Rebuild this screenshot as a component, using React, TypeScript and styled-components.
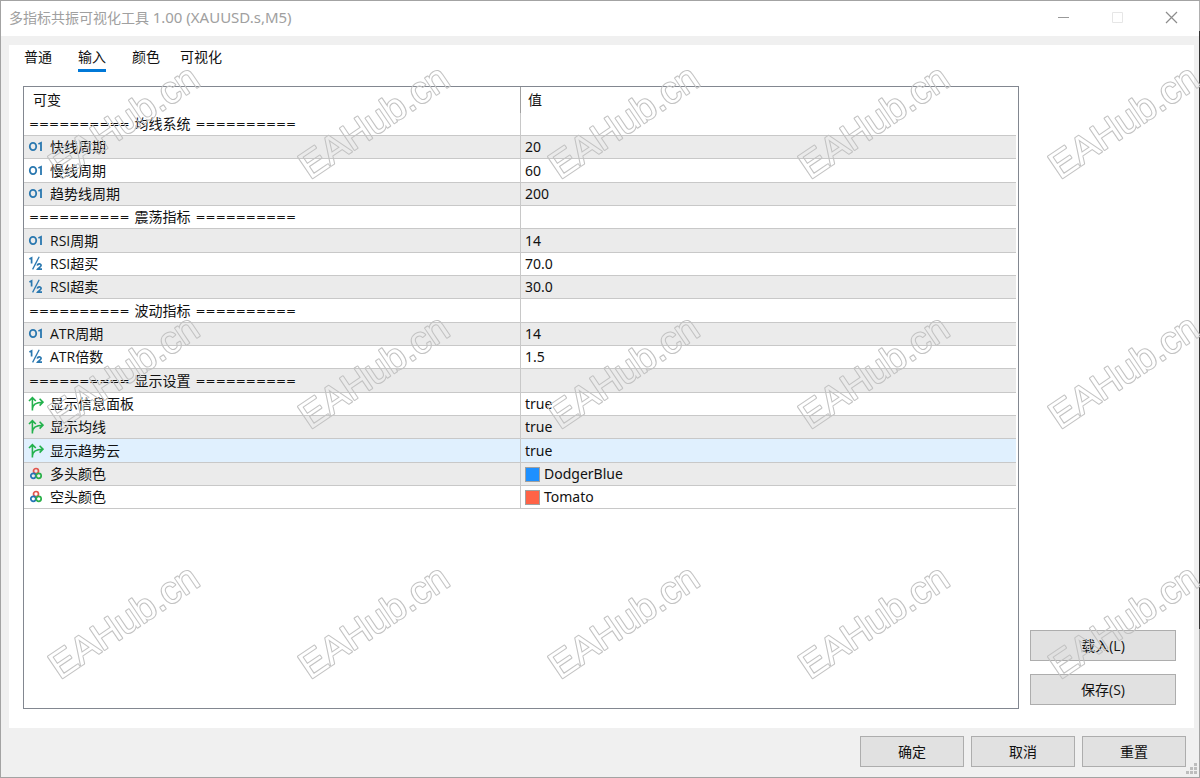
import React from 'react';
import styled, { createGlobalStyle } from 'styled-components';

const Global = createGlobalStyle`
  * { box-sizing: border-box; }
  body {
    margin: 0;
    font-family: 'Open Sans', 'Noto Sans CJK SC', sans-serif;
    font-size: 14px;
    line-height: 20px;
    color: #111;
  }
  button { font: inherit; color: inherit; }
`;

const Window = styled.div`
  position: relative;
  display: flex;
  flex-direction: column;
  min-height: 100vh;
  padding-right: 1px;
  border: 1px solid #a3a3a3;
  border-right: 0;
  background: linear-gradient(#b0b0b0 30px, #333 30px, #333 628px, #a3a3a3 628px);
`;

const TitleBar = styled.header`
  display: flex;
  align-items: center;
  justify-content: space-between;
  height: 35px;
  padding: 0 14px 2px 8px;
  background: #fff;
  color: #a0a0a0;
`;

const Title = styled.h1`
  margin: 0;
  font-family: 'Noto Sans', 'Noto Sans CJK SC', sans-serif;
  font-size: 14px;
  font-weight: 400;
`;

const Version = styled.span`
  font-size: 15px;
`;

const Controls = styled.div`
  display: flex;
  gap: 26px;
`;

const Control = styled.button`
  display: flex;
  align-items: center;
  justify-content: center;
  width: 28px;
  height: 24px;
  padding: 0;
  border: 0;
  background: none;
`;

const Body = styled.div`
  display: flex;
  flex: 1;
  flex-direction: column;
  padding: 9px 5px 0 8px;
  background: #f0f0f0;
`;

const Panel = styled.main`
  display: flex;
  flex: 1;
  flex-direction: column;
  padding: 2px 18px 19px 14px;
  background: #fff;
`;

const Tabs = styled.nav`
  display: flex;
  margin: 0 0 14px -12px;
`;

const Tab = styled.button`
  display: flex;
  justify-content: center;
  min-width: 54px;
  padding: 0 7px;
  border: 0;
  background: none;
`;

const TabLabel = styled.span<{ $active?: boolean }>`
  height: 25px;
  line-height: 20px;
  border-bottom: 3px solid ${(p) => (p.$active ? '#0078d7' : 'transparent')};
`;

const Content = styled.div`
  display: flex;
  flex: 1;
  gap: 11px;
`;

const List = styled.div`
  flex: 1;
  padding-right: 2px;
  border: 1px solid #828790;
  background: #fff;
`;

const Table = styled.table`
  width: 100%;
  table-layout: fixed;
  border-collapse: separate;
  border-spacing: 0;
`;

const Head = styled.th`
  height: 26px;
  padding: 0 9px;
  font-weight: 400;
  text-align: left;
  & + & {
    padding-left: 7px;
    border-left: 1px solid #a0a0a0;
  }
`;

const Row = styled.tr<{ $selected?: boolean }>`
  height: 23px;
  background: ${(p) => (p.$selected ? '#e0f0fe' : '#fff')};
  &:nth-child(even) {
    background: ${(p) => (p.$selected ? '#e0f0fe' : '#ebebeb')};
  }
  &:nth-child(3n) { height: 24px; }
`;

const Cell = styled.td`
  padding: 0 4px;
  border-bottom: 1px solid #c8c8c8;
  & + & { border-left: 1px solid #c8c8c8; }
`;

const Line = styled.div`
  display: flex;
  align-items: center;
  height: 20px;
  gap: 4px;
`;

const NameLine = styled(Line)`
  gap: 6px;
`;

const Value = styled(Line)`
  font-family: 'Noto Sans', sans-serif;
`;

const Rule = styled.span`
  font-family: 'DejaVu Sans', sans-serif;
  font-size: 12px;
`;

const Section = styled(Line)`
  gap: 5px;
  padding-left: 1px;
`;

const Swatch = styled.span<{ $color: string }>`
  width: 15px;
  height: 15px;
  border: 1px solid #a0a0a0;
  background: ${(p) => p.$color};
`;

const Side = styled.aside`
  display: flex;
  flex-direction: column;
  justify-content: flex-end;
  gap: 13px;
  width: 146px;
  padding-bottom: 4px;
`;

const PushButton = styled.button`
  height: 31px;
  padding: 0;
  border: 1px solid #adadad;
  background: #e1e1e1;
`;

const Footer = styled.footer`
  display: flex;
  justify-content: flex-end;
  gap: 7px;
  padding: 8px 8px 10px 0;
  ${PushButton} { width: 104px; }
`;

const Grip = styled.svg`
  position: absolute;
  right: 2px;
  bottom: 2px;
`;

const Watermarks = styled.div`
  position: absolute;
  inset: -1px 0 0 -1px;
  display: grid;
  grid-template-columns: repeat(5, 250px);
  grid-auto-rows: 250px;
  overflow: hidden;
  pointer-events: none;
`;

const Mark = styled.svg`
  overflow: visible;
  font-family: 'Liberation Sans', sans-serif;
  font-size: 38px;
`;

type Kind = 'int' | 'double' | 'bool' | 'color';

function TypeIcon({ kind }: { kind: Kind }) {
  return (
    <svg width="16" height="16" viewBox="0 0 16 16" fill="none" aria-hidden="true">
      {kind === 'int' && (
        <g stroke="#2a78b0" strokeWidth="1.8">
          <ellipse cx="5" cy="7.5" rx="3.2" ry="3.7" />
          <path d="M10.4 5 13 3.8V12" />
        </g>
      )}
      {kind === 'double' && (
        <g stroke="#2a78b0" strokeWidth="1.7">
          <path d="M1.4 3 3.6 1.9V7.4" />
          <path d="M11.2 0.8 4.6 13.4" strokeWidth="1.3" />
          <path d="M9.4 9.6C9.5 7.4 13.2 7.4 13.1 9.5 13 10.9 10.4 11.8 9.6 13.2H14" />
        </g>
      )}
      {kind === 'bool' && (
        <g stroke="#22b14c" strokeWidth="1.6">
          <path d="M4.4 14.6V1.6M1 5 4.4 1.6 7.8 5M4.4 13C4.4 8.6 7 6.4 15 6.2M11.6 2.8 15 6.2 11.6 9.6" />
        </g>
      )}
      {kind === 'color' && (
        <g strokeWidth="1.7">
          <circle cx="8" cy="5" r="2.5" stroke="#e2544c" />
          <circle cx="5.3" cy="9.8" r="2.5" stroke="#2474b5" />
          <circle cx="10.7" cy="9.8" r="2.5" stroke="#2bb04a" />
        </g>
      )}
    </svg>
  );
}

interface Item {
  name: string;
  kind?: Kind;
  value?: string;
  swatch?: string;
  selected?: boolean;
}

const items: Item[] = [
  { name: '均线系统' },
  { name: '快线周期', kind: 'int', value: '20' },
  { name: '慢线周期', kind: 'int', value: '60' },
  { name: '趋势线周期', kind: 'int', value: '200' },
  { name: '震荡指标' },
  { name: 'RSI周期', kind: 'int', value: '14' },
  { name: 'RSI超买', kind: 'double', value: '70.0' },
  { name: 'RSI超卖', kind: 'double', value: '30.0' },
  { name: '波动指标' },
  { name: 'ATR周期', kind: 'int', value: '14' },
  { name: 'ATR倍数', kind: 'double', value: '1.5' },
  { name: '显示设置' },
  { name: '显示信息面板', kind: 'bool', value: 'true' },
  { name: '显示均线', kind: 'bool', value: 'true' },
  { name: '显示趋势云', kind: 'bool', value: 'true', selected: true },
  { name: '多头颜色', kind: 'color', value: 'DodgerBlue', swatch: '#1e90ff' },
  { name: '空头颜色', kind: 'color', value: 'Tomato', swatch: '#ff6347' },
];

const tabs = ['普通', '输入', '颜色', '可视化'];
const marks = Array.from({ length: 15 }, (_, i) => i);
const bars = '==========';

export default function App() {
  return (
    <>
      <Global />
      <Window>
        <TitleBar>
          <Title>
            多指标共振可视化工具 <Version>1.00 (XAUUSD.s,M5)</Version>
          </Title>
          <Controls>
            <Control aria-label="最小化">
              <svg width="13" height="13" stroke="#999"><path d="M1 6.5H12" /></svg>
            </Control>
            <Control aria-label="最大化" disabled>
              <svg width="13" height="13" fill="none" stroke="#e6e6e6"><path d="M1.5 1.5H11.5V11.5H1.5Z" /></svg>
            </Control>
            <Control aria-label="关闭">
              <svg width="13" height="13" stroke="#8c8c8c" strokeWidth="1.2"><path d="M1 1 12 12M12 1 1 12" /></svg>
            </Control>
          </Controls>
        </TitleBar>
        <Body>
          <Panel>
            <Tabs>
              {tabs.map((t) => (
                <Tab key={t}>
                  <TabLabel $active={t === '输入'}>{t}</TabLabel>
                </Tab>
              ))}
            </Tabs>
            <Content>
              <List>
                <Table>
                  <thead>
                    <tr>
                      <Head scope="col">可变</Head>
                      <Head scope="col">值</Head>
                    </tr>
                  </thead>
                  <tbody>
                    {items.map((it) => (
                      <Row key={it.name} $selected={it.selected}>
                        <Cell>
                          {it.kind ? (
                            <NameLine>
                              <TypeIcon kind={it.kind} />
                              <span>{it.name}</span>
                            </NameLine>
                          ) : (
                            <Section>
                              <Rule>{bars}</Rule>
                              <span>{it.name}</span>
                              <Rule>{bars}</Rule>
                            </Section>
                          )}
                        </Cell>
                        <Cell>
                          {it.value && (
                            <Value>
                              {it.swatch && <Swatch $color={it.swatch} />}
                              <span>{it.value}</span>
                            </Value>
                          )}
                        </Cell>
                      </Row>
                    ))}
                  </tbody>
                </Table>
              </List>
              <Side>
                <PushButton>载入(L)</PushButton>
                <PushButton>保存(S)</PushButton>
              </Side>
            </Content>
          </Panel>
          <Footer>
            <PushButton>确定</PushButton>
            <PushButton>取消</PushButton>
            <PushButton>重置</PushButton>
          </Footer>
        </Body>
        <Grip width="12" height="12" fill="#bdbdbd" aria-hidden="true">
          <path d="M8 0h3v3h-3zM4 4h3v3h-3zM8 4h3v3h-3zM0 8h3v3h-3zM4 8h3v3h-3zM8 8h3v3h-3z" />
        </Grip>
        <Watermarks aria-hidden="true">
          {marks.map((i) => (
            <Mark key={i} width="250" height="250">
              {/* Keeps the white stroke as a grey outline and drops the black fill. */}
              <filter
                id={`hollow-${i}`}
                filterUnits="userSpaceOnUse"
                x="0"
                y="0"
                width="250"
                height="250"
                colorInterpolationFilters="sRGB"
              >
                <feColorMatrix values="0 0 0 0 0.76  0 0 0 0 0.76  0 0 0 0 0.76  1 0 0 1 -1" />
              </filter>
              <g filter={`url(#hollow-${i})`}>
                <text
                  transform="translate(60 180) rotate(-34)"
                  fill="#000"
                  stroke="#fff"
                  strokeWidth="2"
                  strokeLinejoin="round"
                  paintOrder="stroke"
                >
                  EAHub.cn
                </text>
              </g>
            </Mark>
          ))}
        </Watermarks>
      </Window>
    </>
  );
}
